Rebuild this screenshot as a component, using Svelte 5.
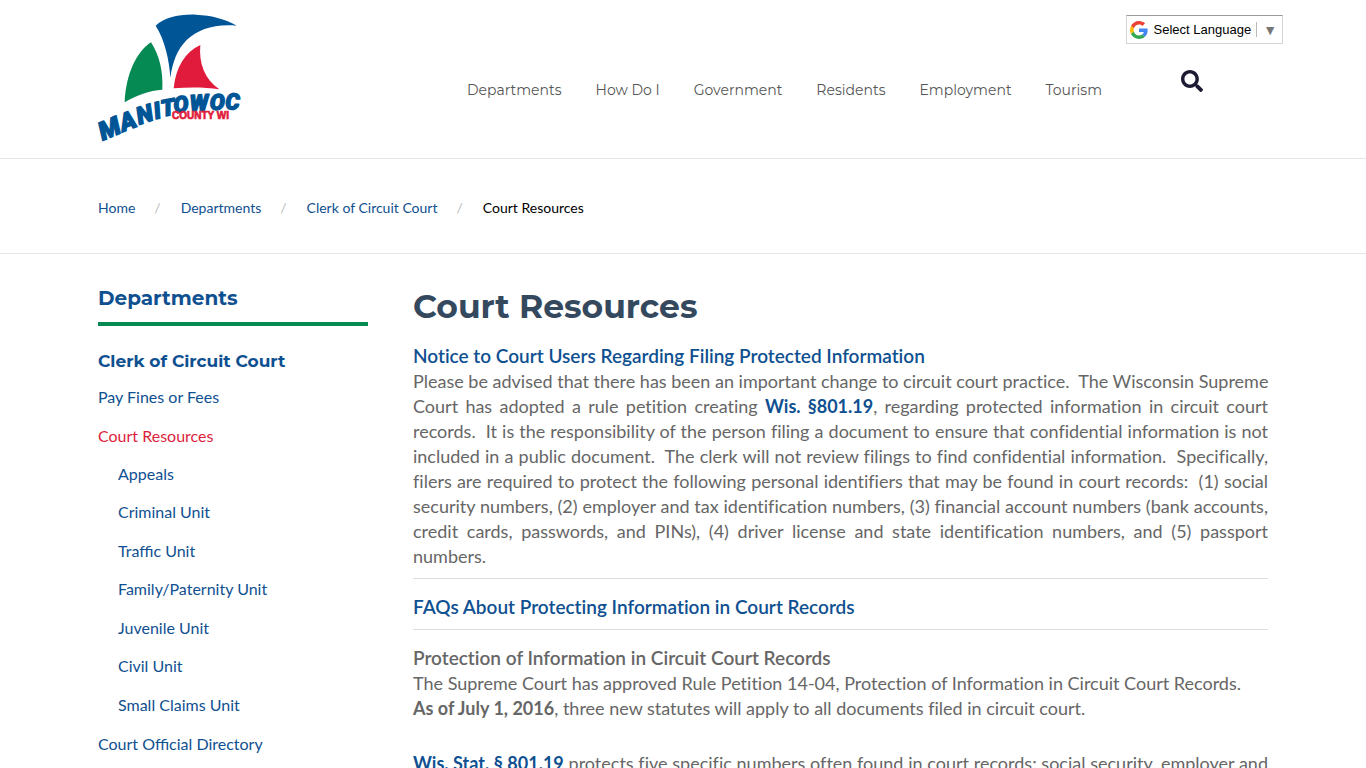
<script lang="ts">
  const navItems = ['Departments', 'How Do I', 'Government', 'Residents', 'Employment', 'Tourism'];
  const crumbs = ['Home', 'Departments', 'Clerk of Circuit Court'];
  const units = [
    'Appeals',
    'Criminal Unit',
    'Traffic Unit',
    'Family/Paternity Unit',
    'Juvenile Unit',
    'Civil Unit',
    'Small Claims Unit',
  ];
</script>

<header>
  <div class="header-inner">
    <a class="logo" href="#home" aria-label="Manitowoc County WI">
      <svg viewBox="24 24 450 399" width="150" height="133" aria-hidden="true">
        <path fill="#005596" d="M197 62 C222 38 268 27 318 29 C365 31 410 43 440 62 C375 56 325 72 290 105 C262 133 248 170 241 218 C238 165 224 104 197 62Z" />
        <path fill="#058a53" d="M183 112 C138 142 108 208 104 292 C140 270 178 257 217 254 C220 198 208 151 183 112Z" />
        <path fill="#e11b3c" d="M331 120 C285 141 257 187 251 250 C298 246 344 246 388 253 C344 222 326 176 331 120Z" />
        <text class="logo-name" x="38 99 148 197 217 253 300 359 406" y="407 381 359 343 335 323 318 315 313" rotate="-23 -21 -18 -14 -10 -6 -3 0 1"><tspan font-size="76">M</tspan><tspan font-size="74">A</tspan><tspan font-size="72">N</tspan><tspan font-size="70">I</tspan><tspan font-size="69">T</tspan>OWOC</text>
        <text class="logo-county" x="246" y="343">COUNTY WI</text>
      </svg>
    </a>
    <div class="header-right">
      <button class="translate" type="button">
        <svg viewBox="0 0 48 48" width="18" height="18" aria-hidden="true">
          <path fill="#ea4335" d="M24 9.5c3.5 0 6.700 1.200 9.200 3.600l6.900-6.900C35.900 2.400 30.500 0 24 0 14.600 0 6.500 5.400 2.600 13.200l8 6.200C12.400 13.700 17.700 9.500 24 9.500z" />
          <path fill="#4285f4" d="M47 24.500c0-1.600-.2-3.100-.4-4.500H24v9h12.900c-.6 3-2.300 5.500-4.800 7.200l7.700 6C44.400 38 47 31.800 47 24.500z" />
          <path fill="#fbbc05" d="M10.500 28.600c-.5-1.500-.8-3-.8-4.600s.3-3.100.8-4.600l-8-6.200C.9 16.500 0 20.100 0 24s.9 7.500 2.600 10.800z" />
          <path fill="#34a853" d="M24 48c6.500 0 11.900-2.100 15.900-5.800l-7.700-6c-2.200 1.400-4.900 2.300-8.200 2.300-6.300 0-11.600-4.200-13.500-9.900l-8 6.200C6.500 42.600 14.600 48 24 48z" />
        </svg>
        <span class="label">Select Language</span>
        <span class="arrow">▼</span>
      </button>
      <div class="nav-row">
        <nav>
          {#each navItems as item}
            <a href="#nav">{item}</a>
          {/each}
        </nav>
        <button class="search" type="button" aria-label="Search">
          <svg viewBox="0 0 512 512" width="22" height="22" aria-hidden="true">
            <path fill="#1c1b33" d="M505 442.700 405.300 343c-4.500-4.500-10.600-7-17-7H372c27.600-35.300 44-79.700 44-128C416 93.100 322.900 0 208 0S0 93.100 0 208s93.100 208 208 208c48.300 0 92.700-16.400 128-44v16.300c0 6.400 2.500 12.500 7 17l99.700 99.700c9.400 9.400 24.600 9.400 33.900 0l28.300-28.300c9.400-9.400 9.400-24.600.1-34zM208 336c-70.700 0-128-57.200-128-128 0-70.700 57.200-128 128-128 70.700 0 128 57.200 128 128 0 70.700-57.200 128-128 128z" />
          </svg>
        </button>
      </div>
    </div>
  </div>
</header>

<div class="crumb-bar">
  <ol class="container crumbs">
    {#each crumbs as crumb}
      <li><a href="#crumb">{crumb}</a></li>
    {/each}
    <li aria-current="page">Court Resources</li>
  </ol>
</div>

<div class="container page">
  <aside>
    <h2>Departments</h2>
    <h3>Clerk of Circuit Court</h3>
    <ul>
      <li><a href="#fees">Pay Fines or Fees</a></li>
      <li>
        <a class="active" href="#resources">Court Resources</a>
        <ul class="sub">
          {#each units as unit}
            <li><a href="#unit">{unit}</a></li>
          {/each}
        </ul>
      </li>
      <li><a href="#directory">Court Official Directory</a></li>
    </ul>
  </aside>

  <main>
    <h1>Court Resources</h1>
    <p><a class="title" href="#notice">Notice to Court Users Regarding Filing Protected Information</a></p>
    <p class="notice">
      <span>Please be advised that there has been an important change to circuit court practice.&nbsp; The Wisconsin Supreme</span>
      <span>Court has adopted a rule petition creating <a href="#801">Wis. §801.19</a>, regarding protected information in circuit court</span>
      <span>records.&nbsp; It is the responsibility of the person filing a document to ensure that confidential information is not</span>
      <span>included in a public document.&nbsp; The clerk will not review filings to find confidential information.&nbsp; Specifically,</span>
      <span>filers are required to protect the following personal identifiers that may be found in court records:&nbsp; (1) social</span>
      <span>security numbers, (2) employer and tax identification numbers, (3) financial account numbers (bank accounts,</span>
      <span>credit cards, passwords, and PINs), (4) driver license and state identification numbers, and (5) passport</span>
      <span>numbers.</span>
    </p>
    <hr />
    <p><a class="title" href="#faq">FAQs About Protecting Information in Court Records</a></p>
    <hr />
    <p>
      <strong class="title">Protection of Information in Circuit Court Records</strong>
      The Supreme Court has approved Rule Petition 14-04, Protection of Information in Circuit Court Records.<br />
      <strong>As of July 1, 2016</strong>, three new statutes will apply to all documents filed in circuit court.
    </p>
    <p class="statute">
      <a href="#stat">Wis. Stat. § 801.19</a> protects five specific numbers often found in court records: social security, employer and taxpayer identification, financial account, driver license, and passport numbers.
    </p>
  </main>
</div>

<style>
  :global(body) {
    height: 100vh;
    overflow: hidden;
    background: #fff;
    color: #666;
    font-family: Lato, sans-serif;
    font-size: 18px;
    line-height: 25px;
  }

  a {
    color: #0f5091;
    text-decoration: none;
  }

  ul,
  ol {
    list-style: none;
    margin: 0;
    padding: 0;
  }

  button {
    background: #fff;
    border: 0;
    padding: 0;
    cursor: pointer;
  }

  .container {
    box-sizing: border-box;
    max-width: 1170px;
    margin: 0 auto;
  }

  header,
  .crumb-bar {
    border-bottom: 1px solid #e5e5e5;
  }

  .header-inner {
    box-sizing: border-box;
    display: flex;
    justify-content: space-between;
    max-width: 1200px;
    margin: 0 auto;
    padding: 13px 0 12px 15px;
  }

  .logo svg {
    display: block;
    overflow: visible;
  }

  .logo text {
    stroke-linejoin: round;
  }

  .logo-name {
    fill: #005596;
    stroke: #005596;
    stroke-width: 4px;
    font-family: Roboto, "Liberation Sans", sans-serif;
    font-weight: 900;
    font-size: 67px;
    font-style: italic;
  }

  .logo-county {
    fill: #e11b3c;
    stroke: #e11b3c;
    stroke-width: 2px;
    font-family: "Liberation Sans", sans-serif;
    font-weight: bold;
    font-size: 30px;
  }

  .header-right {
    display: flex;
    flex-direction: column;
    align-items: flex-end;
    padding-top: 2px;
  }

  .translate {
    display: flex;
    align-items: center;
    height: 29px;
    padding: 0 5px 0 3px;
    border: 1px solid #d5d5d5;
    border-top-color: #9b9b9b;
    font-family: "Liberation Sans", Arial, sans-serif;
    font-size: 13px;
    color: #000;
  }

  .label {
    margin-left: 6px;
    padding-right: 5px;
    border-right: 1px solid #bbb;
  }

  .arrow {
    padding-left: 6px;
    font-size: 14px;
    color: #767676;
  }

  .nav-row {
    display: flex;
    align-items: flex-start;
    gap: 79px;
    padding: 26px 80px 0 0;
  }

  nav {
    display: flex;
    gap: 34px;
    padding-top: 8px;
  }

  nav a {
    font-family: Montserrat, "Open Sans", sans-serif;
    font-size: 14px;
    font-weight: 400;
    color: #555;
  }

  .search svg {
    display: block;
  }

  .crumbs {
    display: flex;
    padding: 36px 0 33px;
    font-size: 14px;
  }

  .crumbs li {
    color: #000;
  }

  .crumbs li + li::before {
    content: "/";
    padding: 0 20px 0 19px;
    color: #bbb;
  }

  .page {
    display: grid;
    grid-template-columns: 270px minmax(0, 1fr);
    gap: 45px;
    padding-top: 30px;
  }

  h1,
  h2,
  h3 {
    margin: 0;
    font-family: Montserrat, Inter, sans-serif;
    font-weight: 700;
    color: #0f5091;
  }

  h1 {
    margin-bottom: 15px;
    font-size: 33px;
    line-height: 44px;
    color: #34495e;
  }

  h2 {
    padding: 1px 0 11px;
    border-bottom: 4px solid #058a53;
    font-size: 20px;
    line-height: 26px;
  }

  h3 {
    padding: 23px 0 4px;
    font-size: 17px;
    line-height: 24px;
  }

  aside ul a {
    display: block;
    font-size: 16px;
    line-height: 39px;
  }

  aside a.active {
    color: #dc1f3c;
  }

  .sub {
    display: grid;
    grid-auto-rows: 1fr;
    height: 269px;
    padding-left: 20px;
  }

  aside .sub a {
    line-height: 38px;
  }

  main {
    font-variant-ligatures: none;
  }

  p {
    margin: 0;
  }

  p a,
  strong {
    font-weight: 700;
  }

  p .title {
    display: block;
    padding-bottom: 1px;
    font-size: 19px;
    font-weight: 600;
  }

  .notice span {
    display: block;
    text-align-last: justify;
  }

  .notice span:last-child {
    text-align-last: left;
  }

  @media (min-width: 1200px) {
    .notice span {
      white-space: nowrap;
    }
  }

  .statute {
    margin-top: 30px;
    text-align: justify;
  }

  hr {
    margin: 9px 0 15px;
    border: 0;
    border-top: 1px solid #ddd;
  }
</style>
